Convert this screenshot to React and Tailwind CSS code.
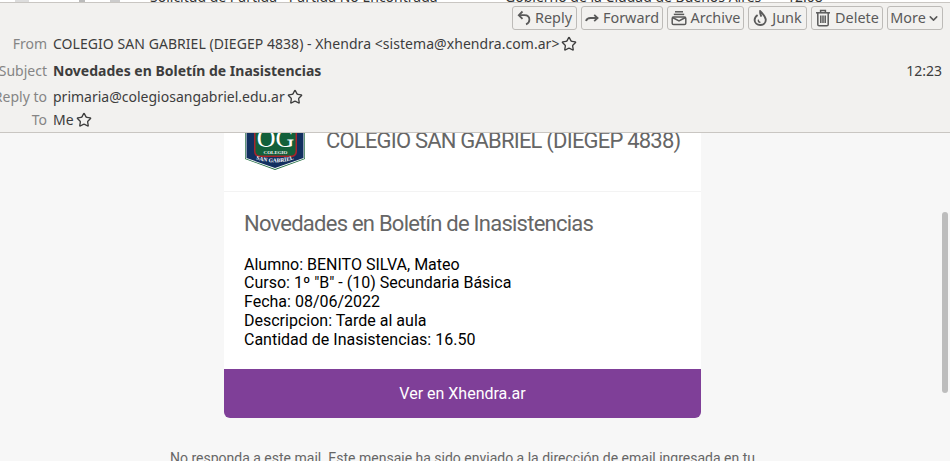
import { Star, ChevronDown } from 'lucide-react'

const ReplyIcon = () => (
  <svg width="14" height="16" viewBox="0 0 14 16" fill="none" stroke="currentColor" strokeWidth="1.8" className="shrink-0">
    <path d="M5.5 1.5 L1.8 5.2 L5.5 8.9" />
    <path d="M2 5.2 H7.5 C10.6 5.2 12.4 7.2 12.4 9.8 C12.4 12 11.2 13.6 9 14.4" />
  </svg>
)

const ForwardIcon = () => (
  <svg width="14" height="16" viewBox="0 0 14 16" fill="none" stroke="currentColor" strokeWidth="1.8" className="shrink-0">
    <path d="M1 11 C1.6 9 3.4 8 5.5 8 H12.4" />
    <path d="M9.2 4.8 L12.6 8 L9.2 11.2" />
  </svg>
)

const ArchiveIcon = () => (
  <svg width="16" height="16" viewBox="0 0 16 16" fill="none" stroke="currentColor" strokeWidth="1.5" className="shrink-0">
    <path d="M4 1.8 H12" />
    <path d="M2.8 4.4 H13.2" />
    <rect x="1.2" y="7" width="13.6" height="7.6" rx="1.4" />
    <path d="M1.5 7.5 L8 11 L14.5 7.5" />
  </svg>
)

const JunkIcon = () => (
  <svg width="15" height="16" viewBox="0 0 15 16" fill="none" stroke="currentColor" strokeWidth="1.9" className="shrink-0">
    <path d="M4.6 5 C2.6 6.4 1.6 8 1.6 10 C1.6 13 4.2 15 7.2 15 C10.4 15 12.8 12.8 12.8 9.8 C12.8 6.6 10.4 4.4 7.2 1.2 C6.8 3.6 7.6 5 8.4 6.6" />
    <path d="M5.6 9.6 C4.8 11 5.8 12.4 7.4 12.2" strokeWidth="1.4" />
  </svg>
)

const TrashIcon = () => (
  <svg width="16" height="18" viewBox="0 0 16 18" fill="none" stroke="currentColor" strokeWidth="1.5" className="shrink-0">
    <path d="M1 3.8 H15" />
    <path d="M5.6 3.6 V1.4 H10.4 V3.6" />
    <path d="M2.8 4 V15.4 C2.8 16.2 3.4 16.8 4.2 16.8 H11.8 C12.6 16.8 13.2 16.2 13.2 15.4 V4" />
    <path d="M5.8 6.5 V14 M8 6.5 V14 M10.2 6.5 V14" />
  </svg>
)

const Logo = () => (
  <svg width="60" height="37" viewBox="0 0 60 37" className="shrink-0 self-start">
    <path d="M0 0 H60 V26 L30 37 L0 26 Z" fill="#1d6b3f" />
    <path d="M0.7 0 H59.3 V25.5 L30 36 L0.7 25.5 Z" fill="#ffffff" />
    <path d="M1.5 0 H58.5 V25 L30 35 L1.5 25 Z" fill="#12305f" />
    <path d="M9 0 H52 V18 C52 22 50 24 46 24 H15 C11 24 9 22 9 18 Z" fill="#a5232c" />
    <path d="M10.5 0 H50.5 V17.5 C50.5 21 49 22.5 45.5 22.5 H15.5 C12 22.5 10.5 21 10.5 17.5 Z" fill="#12603a" />
    <text x="30.5" y="14" textAnchor="middle" fontFamily="Liberation Serif, serif" fontSize="26" fill="#ffffff">OG</text>
    <text x="30.5" y="20.5" textAnchor="middle" fontFamily="Liberation Serif, serif" fontWeight="700" fontSize="5" fill="#f2f2f2">COLEGIO</text>
    <path id="sg" d="M6 24.5 Q30 34 54 24.5" fill="none" />
    <text fontFamily="Liberation Serif, serif" fontWeight="700" fontSize="5.6" fill="#ffffff" textAnchor="middle">
      <textPath href="#sg" startOffset="50%">SAN GABRIEL</textPath>
    </text>
  </svg>
)

const buttons = [
  { label: 'Reply', icon: <ReplyIcon />, w: 'w-[65px]' },
  { label: 'Forward', icon: <ForwardIcon />, w: 'w-[82px]' },
  { label: 'Archive', icon: <ArchiveIcon />, w: 'w-[77px]' },
  { label: 'Junk', icon: <JunkIcon />, w: 'w-[59px]' },
  { label: 'Delete', icon: <TrashIcon />, w: 'w-[72px]' },
]

const details = [
  'Alumno: BENITO SILVA, Mateo',
  'Curso: 1º "B" - (10) Secundaria Básica',
  'Fecha: 08/06/2022',
  'Descripcion: Tarde al aula',
  'Cantidad de Inasistencias: 16.50',
]

function HeaderRow({ label, className, children }) {
  return (
    <div className={`flex items-center ${className}`}>
      <div className="flex w-[47px] shrink-0 justify-end whitespace-nowrap text-[#858585]">{label}</div>
      <div className="ml-[6px] flex min-w-0 flex-1 items-center whitespace-nowrap">{children}</div>
    </div>
  )
}

function HeaderStar() {
  return <Star size={16} strokeWidth={2} className="ml-[2px] shrink-0 text-[#3d3d3d]" />
}

export default function App() {
  return (
    <div className="relative flex h-[461px] w-[950px] flex-col overflow-hidden bg-[#f7f7f7] font-['Roboto',sans-serif]">
      {/* list row behind the header, almost all scrolled away */}
      <div className="flex h-[2px] shrink-0 items-start overflow-hidden bg-white font-['Noto_Sans',sans-serif] text-[14px] leading-[14px] text-[#333]">
        <div className="ml-[15px] h-[2px] w-[14px] bg-[#dddddd]" />
        <div className="ml-[50px] h-[2px] w-[6px] bg-[#bbbbbb]" />
        <div className="ml-[25px] h-[2px] w-[10px] bg-[#cccccc]" />
        <div className="ml-[30px] -mt-[10px] w-[355px] shrink-0 whitespace-nowrap">Solicitud de Partida - Partida No Encontrada</div>
        <div className="-mt-[10px] w-[282px] shrink-0 whitespace-nowrap">Gobierno de la Ciudad de Buenos Aires</div>
        <div className="-mt-[10px] shrink-0">12:08</div>
      </div>

      {/* message header */}
      <header className="flex h-[131px] shrink-0 flex-col border-y border-[#c9c6c2] bg-[#f2f1ef] font-['Noto_Sans',sans-serif] text-[14px] text-[#3d3d3d]">
        <div className="flex h-[27px] shrink-0 items-end justify-end gap-[4px] pr-[7px] text-[#5a5a5a]">
          {buttons.map((b) => (
            <button key={b.label} className={`flex h-[24px] items-center justify-center gap-[4px] rounded-[3px] border border-[#bdbbb8] text-[14.4px] ${b.w}`}>
              {b.icon}
              {b.label}
            </button>
          ))}
          <button className="flex h-[24px] w-[56px] items-center justify-center gap-px rounded-[3px] border border-[#bdbbb8] text-[14.4px]">
            More
            <ChevronDown size={13} strokeWidth={2.8} className="shrink-0" />
          </button>
        </div>
        <HeaderRow label="From" className="h-[27px]">
          <span className="tracking-[0.05px]">COLEGIO SAN GABRIEL (DIEGEP 4838) - Xhendra &lt;sistema@xhendra.com.ar&gt;</span>
          <HeaderStar />
        </HeaderRow>
        <HeaderRow label="Subject" className="h-[27px]">
          <span className="font-bold">Novedades en Boletín de Inasistencias</span>
          <span className="ml-auto pr-[8px]">12:23</span>
        </HeaderRow>
        <HeaderRow label="Reply to" className="h-[25px]">
          <span>primaria@colegiosangabriel.edu.ar</span>
          <HeaderStar />
        </HeaderRow>
        <HeaderRow label="To" className="h-[21px]">
          <span>Me</span>
          <HeaderStar />
        </HeaderRow>
      </header>

      {/* email body */}
      <main className="min-h-0 flex-1 overflow-hidden">
        <div className="ml-[224px] w-[477px] overflow-hidden rounded-b-[6px] bg-white">
          <div className="flex h-[59px] gap-[21px] border-b border-[#f3f3f3] pl-[21px]">
            <Logo />
            <div className="mt-[-5px] whitespace-nowrap text-[22px] leading-[26px] tracking-[-0.8px] text-[#666666]">COLEGIO SAN GABRIEL (DIEGEP 4838)</div>
          </div>
          <div className="px-[20px] pt-[19px]">
            <h1 className="text-[22px] leading-[26px] tracking-[-0.76px] text-[#666666]">Novedades en Boletín de Inasistencias</h1>
            <div className="mt-[18.5px] pb-[19.5px] text-[16px] leading-[18.75px] text-black">
              {details.map((d) => (
                <div key={d}>{d}</div>
              ))}
            </div>
          </div>
          <div className="flex h-[49px] items-center justify-center bg-[#7f3f98] pt-px text-[16px] text-white">Ver en Xhendra.ar</div>
        </div>
        <p className="mt-[32px] whitespace-nowrap pl-[170px] text-[14px] leading-[16px] text-[#666666]">
          No responda a este mail. Este mensaje ha sido enviado a la dirección de email ingresada en tu
        </p>
      </main>

      {/* overlay scrollbar */}
      <div className="absolute left-[942px] top-[212px] h-[181px] w-[6px] rounded-full bg-[#bdbdbd]" />
    </div>
  )
}
